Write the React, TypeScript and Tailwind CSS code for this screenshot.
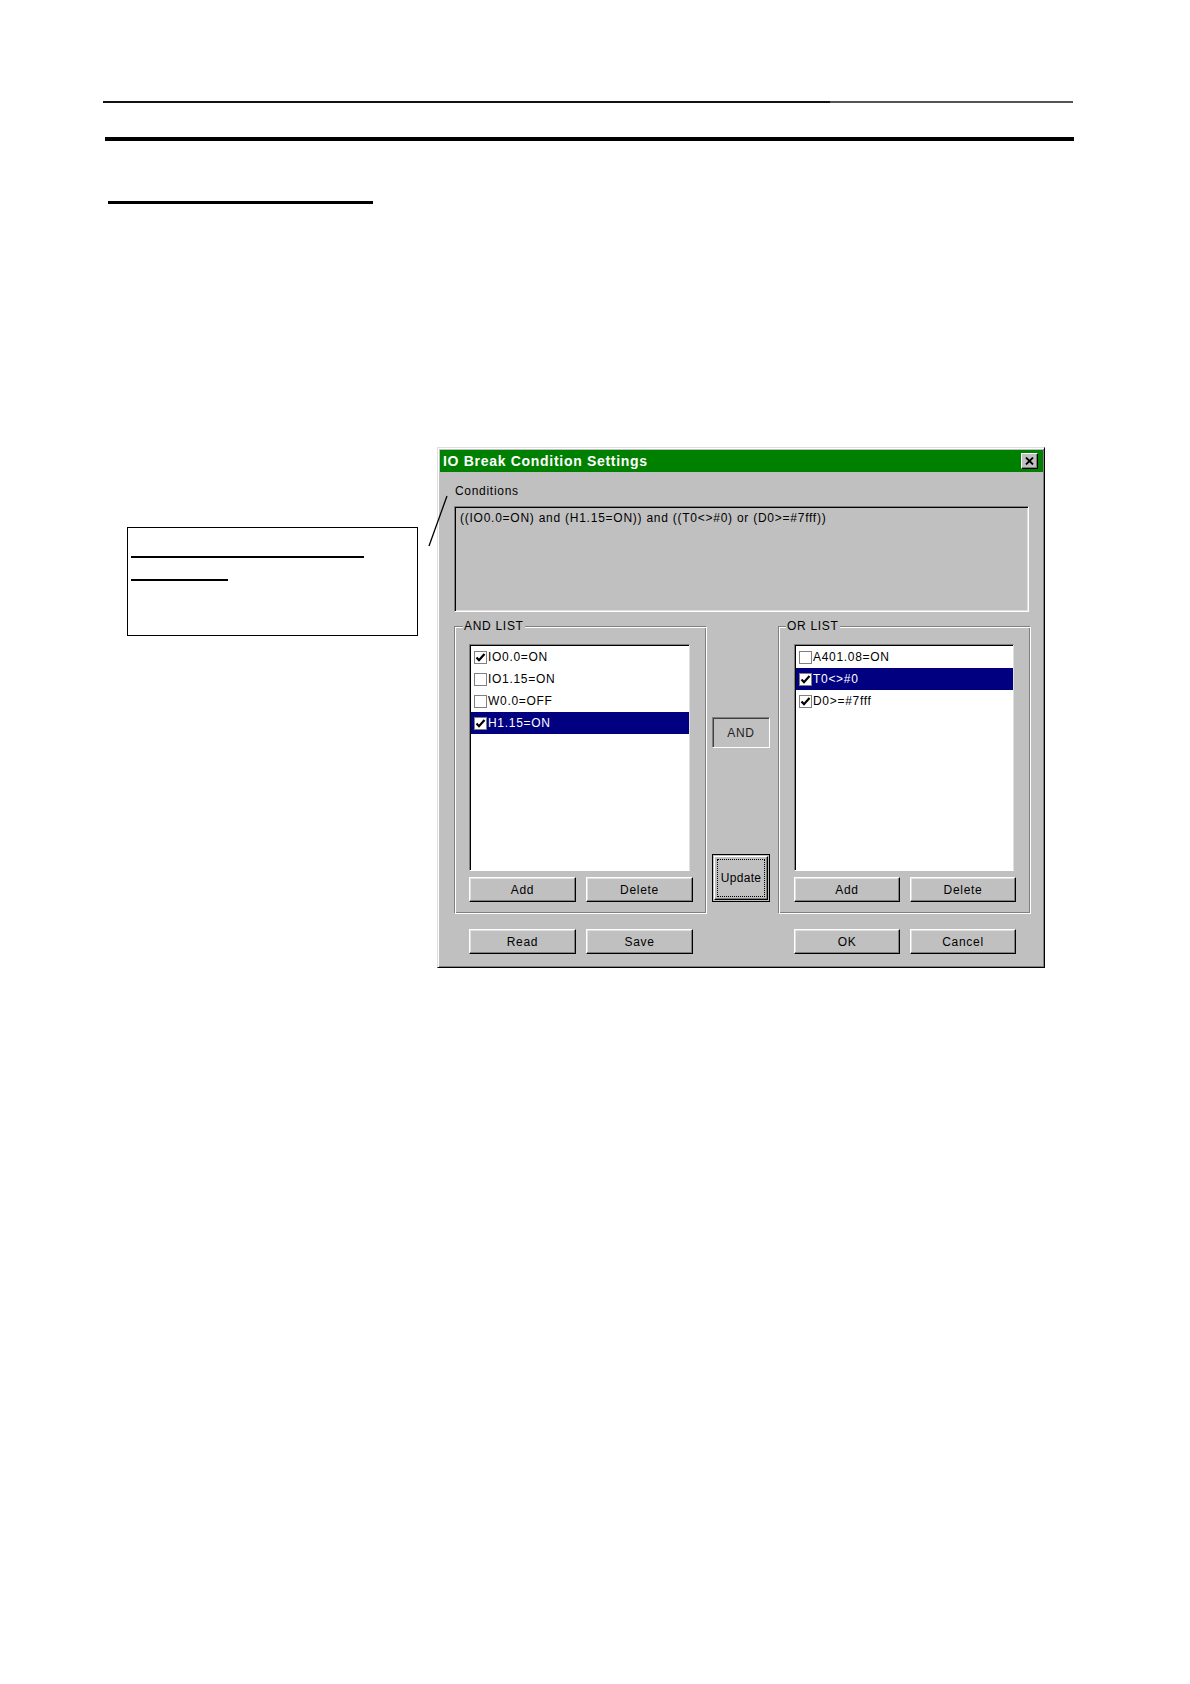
import type { ReactNode } from "react";

type BtnProps = {
  children: ReactNode;
  className?: string;
};

function Btn({ children, className = "" }: BtnProps) {
  return (
    <div
      className={`flex items-center justify-center h-[25px] bg-[#c0c0c0] border border-t-white border-l-white border-b-black border-r-black shadow-[inset_-1px_-1px_0_#808080,inset_1px_1px_0_#dfdfdf] text-[12px] tracking-[0.7px] text-black ${className}`}
    >
      {children}
    </div>
  );
}

function Check({ checked }: { checked: boolean }) {
  return (
    <div className="w-[13px] h-[13px] shrink-0 bg-white border border-[#808080] flex items-center justify-center">
      {checked && (
        <svg width="11" height="11" viewBox="0 0 11 11">
          <path d="M1.5 5.5 L4 8.2 L9.5 2" stroke="#000" strokeWidth="2.2" fill="none" />
        </svg>
      )}
    </div>
  );
}

type Item = { label: string; checked: boolean; selected?: boolean };

function ListBox({ items, className = "" }: { items: Item[]; className?: string }) {
  return (
    <div
      className={`h-[227px] bg-white border border-t-[#808080] border-l-[#808080] border-b-white border-r-[#dfdfdf] shadow-[inset_1px_1px_0_#000] pt-[1px] pl-[1px] ${className}`}
    >
      {items.map((it) => (
        <div
          key={it.label}
          className={`flex items-center h-[22px] pl-[3px] text-[12px] tracking-[0.7px] ${
            it.selected ? "bg-[#000080] text-white" : "text-black"
          }`}
        >
          <Check checked={it.checked} />
          <span className="ml-[1px]">{it.label}</span>
        </div>
      ))}
    </div>
  );
}

function Group({ title, titleLeft, children }: { title: string; titleLeft: string; children: ReactNode }) {
  return (
    <div className="relative h-[288px] border border-t-[#808080] border-l-[#808080] border-b-white border-r-white shadow-[inset_1px_1px_0_#fff,inset_-1px_-1px_0_#808080]">
      <span className={`absolute top-[-8px] ${titleLeft} px-[1px] bg-[#c0c0c0] leading-[14px] text-[12px] tracking-[0.7px]`}>
        {title}
      </span>
      {children}
    </div>
  );
}

export default function App() {
  const andItems: Item[] = [
    { label: "IO0.0=ON", checked: true },
    { label: "IO1.15=ON", checked: false },
    { label: "W0.0=OFF", checked: false },
    { label: "H1.15=ON", checked: true, selected: true },
  ];
  const orItems: Item[] = [
    { label: "A401.08=ON", checked: false },
    { label: "T0<>#0", checked: true, selected: true },
    { label: "D0>=#7fff", checked: true },
  ];

  return (
    <div className="h-[1684px] bg-white font-['Liberation_Sans',Arial,sans-serif] text-black overflow-hidden">
      {/* header rules */}
      <div className="pt-[101px] pl-[103px]">
        <div className="flex w-[970px] h-[2px]">
          <div className="w-[727px] bg-[#111]" />
          <div className="flex-1 bg-[#555]" />
        </div>
      </div>
      <div className="mt-[34px] ml-[105px] w-[969px] h-[4px] bg-black" />
      <div className="mt-[60px] ml-[108px] w-[265px] h-[3px] bg-black" />

      {/* figure */}
      <div className="relative mt-[243px] flex items-start">
        <div className="ml-[127px] mt-[80px] w-[291px] h-[109px] border-[1.5px] border-black pt-[28px] pl-[2.5px]">
          <div className="w-[233px] h-[1.5px] bg-black" />
          <div className="mt-[21.5px] w-[97px] h-[1.5px] bg-black" />
        </div>

        {/* dialog */}
        <div className="ml-[19px] w-[608px] h-[521px] bg-[#c0c0c0] border border-t-[#dfdfdf] border-l-[#dfdfdf] border-b-black border-r-black shadow-[inset_1px_1px_0_#fff,inset_-1px_-1px_0_#808080] flex flex-col">
          <div className="mt-[2px] ml-[2px] mr-[1px] h-[22px] bg-[#008000] flex items-center justify-between pl-[3px] pr-[5px]">
            <span className="text-white font-bold text-[14px] tracking-[0.7px]">IO Break Condition Settings</span>
            <div className="w-[17px] h-[16px] bg-[#c0c0c0] border border-t-white border-l-white border-b-black border-r-black shadow-[inset_-1px_-1px_0_#808080] flex items-center justify-center">
              <svg width="9" height="8" viewBox="0 0 9 8">
                <path d="M1 0.5 L8 7.5 M8 0.5 L1 7.5" stroke="#000" strokeWidth="1.8" />
              </svg>
            </div>
          </div>

          <div className="pl-[16px] flex flex-col">
            <div className="mt-[12px] ml-[1px] h-[14px] leading-[14px] text-[12px] tracking-[0.7px]">Conditions</div>
            <div className="mt-[8px] w-[575px] h-[106px] border border-t-[#808080] border-l-[#808080] border-b-white border-r-white shadow-[inset_1px_1px_0_#000,inset_-1px_-1px_0_#dfdfdf] pt-[4px] pl-[5px] leading-[14px] text-[12px] tracking-[0.75px]">
              {"((IO0.0=ON) and (H1.15=ON)) and ((T0<>#0) or (D0>=#7fff))"}
            </div>

            <div className="mt-[14px] grid grid-cols-[253px_71px_253px]">
              <Group title="AND LIST" titleLeft="left-[8px]">
                <div className="pt-[17px] pl-[14px]">
                  <ListBox items={andItems} className="w-[221px]" />
                  <div className="mt-[6px] flex gap-[10px]">
                    <Btn className="w-[107px]">Add</Btn>
                    <Btn className="w-[107px]">Delete</Btn>
                  </div>
                </div>
              </Group>

              <div className="flex flex-col pl-[5px]">
                <div className="mt-[91px] w-[58px] h-[31px] flex items-center justify-center border border-t-[#808080] border-l-[#808080] border-b-white border-r-white shadow-[inset_1px_1px_0_#404040] text-[12px] tracking-[0.7px] text-[#222]">
                  AND
                </div>
                <div className="mt-[106px] w-[58px] h-[48px] border border-black p-[1px]">
                  <div className="w-full h-full border border-t-white border-l-white border-b-black border-r-black shadow-[inset_-1px_-1px_0_#808080] p-[2px]">
                    <div className="w-full h-full border border-dotted border-black flex items-center justify-center text-[12px] tracking-[0.3px]">
                      Update
                    </div>
                  </div>
                </div>
              </div>

              <Group title="OR LIST" titleLeft="left-[7px]">
                <div className="pt-[17px] pl-[15px]">
                  <ListBox items={orItems} className="w-[220px]" />
                  <div className="mt-[6px] flex gap-[10px]">
                    <Btn className="w-[106px]">Add</Btn>
                    <Btn className="w-[106px]">Delete</Btn>
                  </div>
                </div>
              </Group>
            </div>

            <div className="mt-[15px] grid grid-cols-[253px_71px_253px]">
              <div className="pl-[15px] flex gap-[10px]">
                <Btn className="w-[107px]">Read</Btn>
                <Btn className="w-[107px]">Save</Btn>
              </div>
              <div />
              <div className="pl-[16px] flex gap-[10px]">
                <Btn className="w-[106px]">OK</Btn>
                <Btn className="w-[106px]">Cancel</Btn>
              </div>
            </div>
          </div>
        </div>

        {/* leader line */}
        <svg className="absolute left-0 top-0 pointer-events-none" width="460" height="120">
          <line x1="429" y1="99" x2="447" y2="49" stroke="#000" strokeWidth="1.3" />
        </svg>
      </div>
    </div>
  );
}
